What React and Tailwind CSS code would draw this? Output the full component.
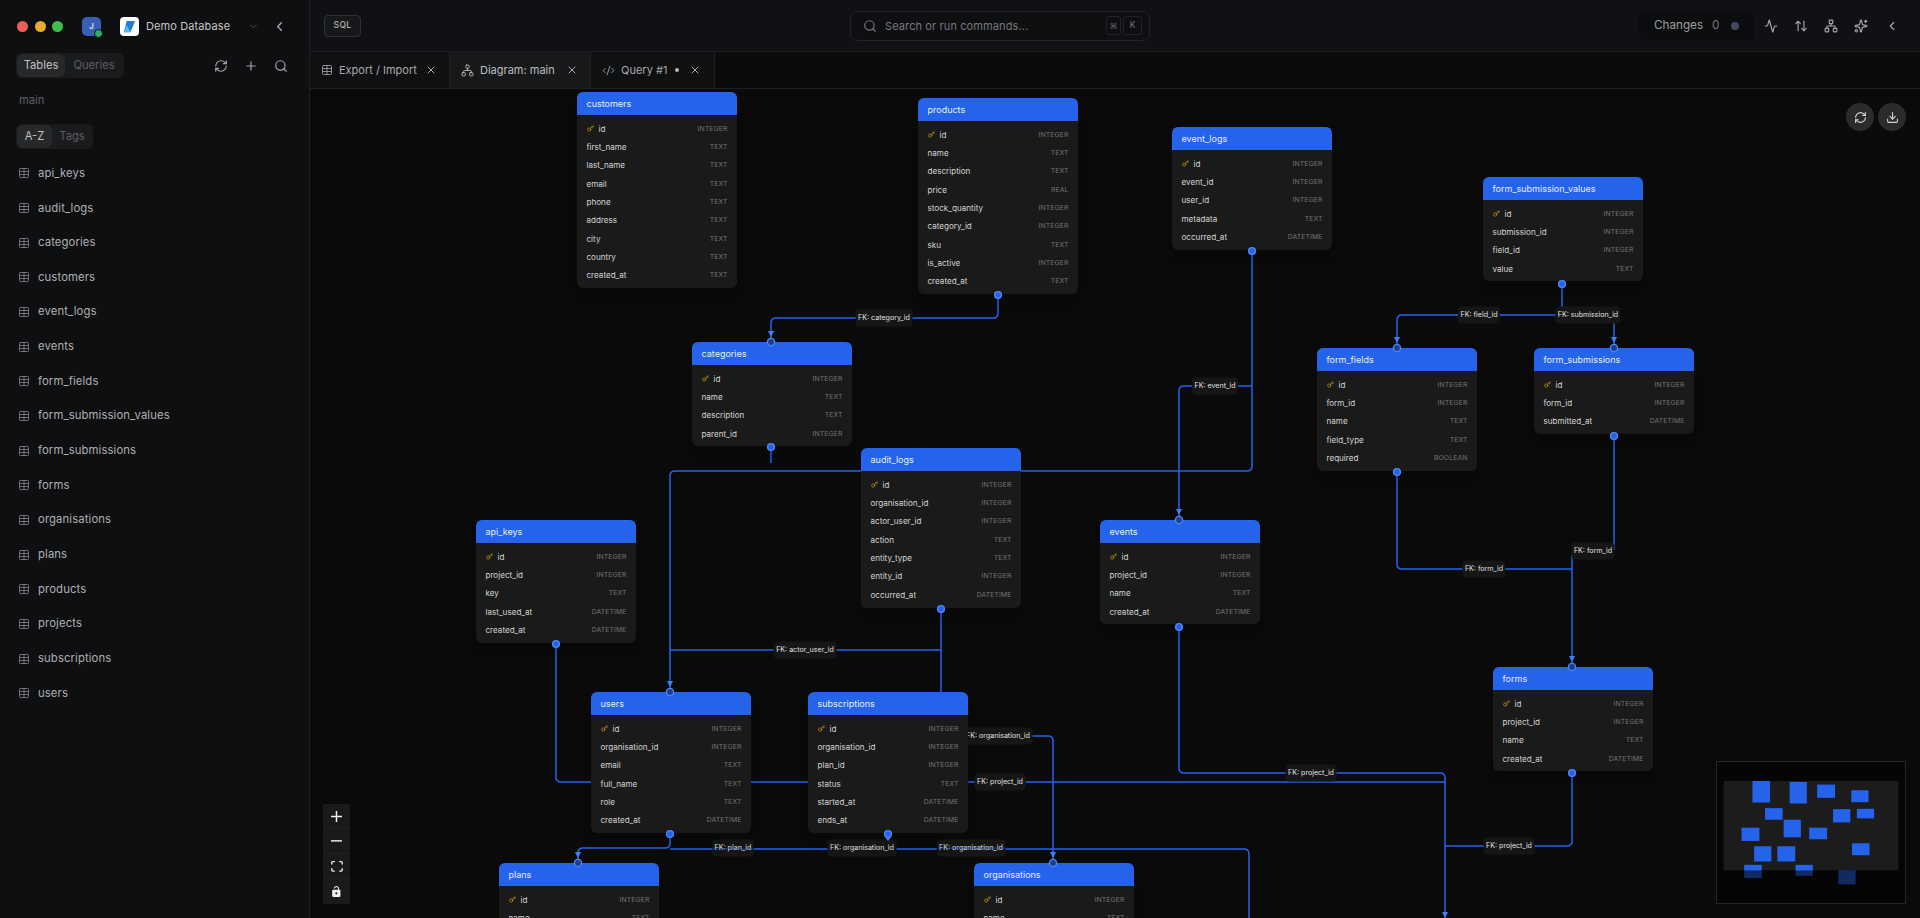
import React from "react";
import { Table, Network, CodeXml, X, RefreshCw, Plus, Search, ChevronDown, ChevronLeft, Activity, ArrowUpDown, Sparkles, Download, Key } from "lucide-react";

const I = "INTEGER", T = "TEXT", D = "DATETIME", R = "REAL", B = "BOOLEAN";
const OX = 310, OY = 89;

const NODES = [
  { n: "customers", x: 577, y: 92, f: [["id", I], ["first_name", T], ["last_name", T], ["email", T], ["phone", T], ["address", T], ["city", T], ["country", T], ["created_at", T]] },
  { n: "products", x: 918, y: 98, f: [["id", I], ["name", T], ["description", T], ["price", R], ["stock_quantity", I], ["category_id", I], ["sku", T], ["is_active", I], ["created_at", T]] },
  { n: "event_logs", x: 1172, y: 127, f: [["id", I], ["event_id", I], ["user_id", I], ["metadata", T], ["occurred_at", D]] },
  { n: "form_submission_values", x: 1483, y: 177, f: [["id", I], ["submission_id", I], ["field_id", I], ["value", T]] },
  { n: "categories", x: 692, y: 342, f: [["id", I], ["name", T], ["description", T], ["parent_id", I]] },
  { n: "form_fields", x: 1317, y: 348, f: [["id", I], ["form_id", I], ["name", T], ["field_type", T], ["required", B]] },
  { n: "form_submissions", x: 1534, y: 348, f: [["id", I], ["form_id", I], ["submitted_at", D]] },
  { n: "audit_logs", x: 861, y: 448, f: [["id", I], ["organisation_id", I], ["actor_user_id", I], ["action", T], ["entity_type", T], ["entity_id", I], ["occurred_at", D]] },
  { n: "api_keys", x: 476, y: 520, f: [["id", I], ["project_id", I], ["key", T], ["last_used_at", D], ["created_at", D]] },
  { n: "events", x: 1100, y: 520, f: [["id", I], ["project_id", I], ["name", T], ["created_at", D]] },
  { n: "users", x: 591, y: 692, f: [["id", I], ["organisation_id", I], ["email", T], ["full_name", T], ["role", T], ["created_at", D]] },
  { n: "subscriptions", x: 808, y: 692, f: [["id", I], ["organisation_id", I], ["plan_id", I], ["status", T], ["started_at", D], ["ends_at", D]] },
  { n: "forms", x: 1493, y: 667, f: [["id", I], ["project_id", I], ["name", T], ["created_at", D]] },
  { n: "plans", x: 499, y: 863, f: [["id", I], ["name", T]] },
  { n: "organisations", x: 974, y: 863, f: [["id", I], ["name", T]] },
];

const EDGES = [
  [[998, 296], [998, 318], [771, 318], [771, 342]],
  [[1252, 251], [1252, 471], [670, 471], [670, 692]],
  [[1252, 386], [1179, 386], [1179, 520]],
  [[771, 448], [771, 463]],
  [[941, 609], [941, 692]],
  [[941, 650], [670, 650]],
  [[556, 644], [556, 782], [591, 782]],
  [[750, 782], [808, 782]],
  [[968, 782], [1445, 782]],
  [[1179, 627], [1179, 773], [1445, 773], [1445, 918]],
  [[1572, 773], [1572, 846], [1445, 846]],
  [[1397, 472], [1397, 569], [1572, 569]],
  [[1572, 555], [1572, 667]],
  [[1614, 436], [1614, 550]],
  [[1562, 284], [1562, 315], [1397, 315], [1397, 348]],
  [[1562, 315], [1614, 315], [1614, 348]],
  [[670, 834], [670, 848], [578, 848], [578, 863]],
  [[670, 849], [1249, 849], [1249, 918]],
  [[1020, 736], [1053, 736], [1053, 863]],
];

const LABELS = [
  ["FK: category_id", 884, 318], ["FK: event_id", 1215, 386], ["FK: actor_user_id", 805, 650],
  ["FK: field_id", 1479, 315], ["FK: submission_id", 1588, 315], ["FK: form_id", 1484, 569],
  ["FK: form_id", 1593, 551], ["FK: organisation_id", 998, 736], ["FK: project_id", 1000, 782],
  ["FK: project_id", 1311, 773], ["FK: project_id", 1509, 846], ["FK: plan_id", 733, 848],
  ["FK: organisation_id", 862, 848], ["FK: organisation_id", 971, 848],
];

const SOURCES = [[998, 295], [1252, 251], [771, 447], [941, 609], [556, 644], [1179, 627], [1572, 773], [1397, 472], [1614, 436], [1562, 284], [670, 834], [888, 834]];
const TARGETS = [[771, 342], [670, 692], [1179, 520], [1572, 667], [1397, 348], [1614, 348], [578, 863], [1053, 863], [1445, 923]];

function round(points, r = 5) {
  let d = `M${points[0][0]} ${points[0][1]}`;
  for (let i = 1; i < points.length; i++) {
    const [x, y] = points[i];
    if (i === points.length - 1) { d += `L${x} ${y}`; break; }
    const [px, py] = points[i - 1];
    const [nx, ny] = points[i + 1];
    const inx = Math.sign(x - px), iny = Math.sign(y - py), outx = Math.sign(nx - x), outy = Math.sign(ny - y);
    d += `L${x - inx * r} ${y - iny * r}Q${x} ${y} ${x + outx * r} ${y + outy * r}`;
  }
  return d;
}

function EdgeLayer() {
  return (
    <svg className="absolute inset-0 w-full h-full" viewBox={`${OX} ${OY} 1610 829`} fill="none">
      {EDGES.map((p, i) => (
        <path key={i} d={round(p)} stroke="#2563eb" strokeWidth="1.5" />
      ))}
    </svg>
  );
}

function OverLayer() {
  return (
    <svg className="absolute inset-0 w-full h-full pointer-events-none" viewBox={`${OX} ${OY} 1610 829`} fill="none">
      <path d="M712 849H760M938 848H1005" stroke="#2563eb" strokeWidth="1" opacity="0.55" />
      {SOURCES.map(([x, y], i) => (
        <circle key={i} cx={x} cy={y} r="3.4" fill="#2563eb" stroke="#4f86f7" strokeWidth="1.4" />
      ))}
      <path d="M888 841l-3-4h6z" fill="#3b82f6" />
      {TARGETS.map(([x, y], i) => (
        <g key={i}>
          <path d={`M${x - 3} ${y - 11}h6l-3 6z`} fill="#3b82f6" />
          <circle cx={x} cy={y} r="3.6" fill="#1e3f8f" stroke="#4f86f7" strokeWidth="1.4" />
        </g>
      ))}
    </svg>
  );
}

function TableNode({ node }) {
  return (
    <div className="absolute w-[160px] rounded-md bg-[#1a1a1a] pb-[3.5px] shadow-lg" style={{ left: node.x - OX, top: node.y - OY }}>
      <div className="h-[23px] rounded-t-md bg-[#2563eb] flex items-center px-[9.5px] text-[9px] text-[#e6eeff]">{node.n}</div>
      <div className="pt-[4.5px] px-[9.5px]">
        {node.f.map(([name, type]) => (
          <div key={name} className="h-[18.37px] flex items-center justify-between">
            <span className="flex items-center gap-[5px] text-[8.1px] text-[#d4d4d4]">
              {name === "id" && <Key size={7} className="text-[#ca9a16]" strokeWidth={2.4} />}
              {name}
            </span>
            <span className="text-[6.8px] tracking-[0.02em] text-[#757575]">{type}</span>
          </div>
        ))}
      </div>
    </div>
  );
}

function EdgeLabel({ t, x, y }) {
  return (
    <div className="absolute h-[17px] -translate-x-1/2 -translate-y-1/2 px-[2.5px] flex items-center bg-[#161616] rounded-sm text-[7.1px] text-[#e0e0e0] whitespace-nowrap" style={{ left: x - OX, top: y - OY }}>
      {t}
    </div>
  );
}

function Minimap() {
  const rects = [[217, 122, 270, 187], [329, 125, 381, 190], [412, 133, 466, 173], [515, 150, 567, 186], [255, 204, 308, 239], [460, 207, 512, 247], [532, 206, 584, 235], [311, 239, 363, 292], [184, 263, 238, 303], [388, 263, 442, 298], [222, 319, 274, 365], [292, 319, 346, 365], [517, 310, 570, 346], [192, 375, 245, 415], [347, 375, 399, 408], [476, 392, 528, 434]];
  return (
    <div className="absolute right-[14px] bottom-[14px] w-[190px] h-[143px] border border-[#262626] bg-[#050505]">
      <svg viewBox="110 65 567 425" className="w-full h-full block">
        <rect x="130" y="122" width="527" height="270" fill="#1c1c1c" />
        {rects.map((r, i) => (
          <rect key={i} x={r[0]} y={r[1]} width={r[2] - r[0]} height={r[3] - r[1]} fill="#2563eb" />
        ))}
        <rect x="110" y="392" width="567" height="98" fill="#050505" opacity="0.6" />
      </svg>
    </div>
  );
}

function Controls() {
  const cell = "w-[27px] h-[25px] flex items-center justify-center border-b border-[#222] last:border-b-0";
  return (
    <div className="absolute left-[13px] bottom-[14px] w-[27px] bg-[#1a1a1a] text-[#f0f0f0]">
      <div className={cell}><svg viewBox="0 0 32 32" className="w-[11px] h-[11px]" fill="currentColor"><path d="M32 18.133H18.133V32h-4.266V18.133H0v-4.266h13.867V0h4.266v13.867H32z" /></svg></div>
      <div className={cell}><svg viewBox="0 0 32 5" className="w-[11px] h-[2px]" fill="currentColor"><path d="M0 0h32v4.2H0z" /></svg></div>
      <div className={cell}><svg viewBox="0 0 32 30" className="w-[12px] h-[11px]" fill="currentColor"><path d="M3.692 4.63c0-.53.4-.938.939-.938h5.215V0H4.708C2.13 0 0 2.054 0 4.63v5.216h3.692V4.631zM27.354 0h-5.2v3.692h5.17c.53 0 .984.4.984.939v5.215H32V4.631A4.624 4.624 0 0027.354 0zm.954 24.83c0 .532-.4.94-.939.94h-5.215v3.768h5.215c2.577 0 4.631-2.13 4.631-4.707v-5.139h-3.692v5.139zm-23.677.94c-.531 0-.939-.4-.939-.94v-5.138H0v5.139c0 2.577 2.13 4.707 4.708 4.707h5.138V25.77H4.631z" /></svg></div>
      <div className={cell}><svg viewBox="0 0 25 32" className="w-[9px] h-[11px]" fill="currentColor"><path d="M21.333 10.667H19.81V7.619C19.81 3.429 16.38 0 12.19 0 8 0 4.571 3.429 4.571 7.619h2.895c0-2.59 2.133-4.724 4.724-4.724 2.59 0 4.724 2.133 4.724 4.724v3.048H2.667A2.677 2.677 0 000 13.333v16c0 1.467 1.2 2.667 2.667 2.667h18.666c1.467 0 2.667-1.2 2.667-2.667v-16c0-1.466-1.2-2.666-2.667-2.666zM12 24.381a3.048 3.048 0 110-6.096 3.048 3.048 0 010 6.096z" /></svg></div>
    </div>
  );
}

function Sidebar() {
  const items = ["api_keys", "audit_logs", "categories", "customers", "event_logs", "events", "form_fields", "form_submission_values", "form_submissions", "forms", "organisations", "plans", "products", "projects", "subscriptions", "users"];
  return (
    <aside className="w-[310px] shrink-0 h-full bg-[#0e0f11] border-r border-[#1e1f21] flex flex-col">
      <div className="h-[52px] shrink-0 flex items-center pl-[17px] pr-[22px]">
        <div className="flex gap-[6.5px]">
          <span className="w-[11px] h-[11px] rounded-full bg-[#ec5f57]" />
          <span className="w-[11px] h-[11px] rounded-full bg-[#e9ad2d]" />
          <span className="w-[11px] h-[11px] rounded-full bg-[#3fc04c]" />
        </div>
        <div className="relative ml-[19px] w-[19px] h-[19px] rounded-[5px] bg-[#3a5db5] flex items-center justify-center text-[8px] font-semibold text-[#dbe5ff]">
          J
          <span className="absolute -right-[2px] -bottom-[2px] w-[9px] h-[9px] rounded-full bg-[#2fae5c] border border-[#0e0f11]" />
        </div>
        <div className="ml-[19px] w-[19px] h-[19px] rounded-[4px] bg-white flex items-center justify-center">
          <svg viewBox="0 0 16 16" className="w-[15px] h-[15px]"><path d="M5 2h9L9 14H2z" fill="#1f7fd6" /><path d="M2 14L5 6l4 8z" fill="#59b6ee" /></svg>
        </div>
        <span className="ml-[7px] text-[11px] tracking-[0.01em] text-[#c6c7c9] whitespace-nowrap">Demo Database</span>
        <ChevronDown size={11} className="ml-auto text-[#55565a]" />
        <ChevronLeft size={15} className="ml-[13px] text-[#b0b1b4]" />
      </div>
      <div className="flex items-center pl-[16px] pr-[21px] mt-px">
        <div className="w-[108px] h-[25px] bg-[#1a1b1d] rounded-md flex items-center p-px text-[11.2px]">
          <span className="w-[48px] h-[23px] rounded-md bg-[#27282a] flex items-center justify-center text-[#c0c1c3]">Tables</span>
          <span className="flex-1 text-center text-[#5d5e61]">Queries</span>
        </div>
        <div className="ml-auto flex items-center gap-[16px] text-[#a5a6a9]">
          <RefreshCw size={14} /><Plus size={14} /><Search size={14} />
        </div>
      </div>
      <div className="mt-[14px] pl-[19px] h-[16px] flex items-center text-[11.2px] text-[#5e5f62]">main</div>
      <div className="mt-[16px] ml-[16px] w-[77px] h-[25px] bg-[#1a1b1d] rounded-md flex items-center p-px text-[11.2px]">
        <span className="w-[35px] h-[23px] rounded-md bg-[#27282a] flex items-center justify-center text-[#c0c1c3]">A-Z</span>
        <span className="flex-1 text-center text-[#5d5e61]">Tags</span>
      </div>
      <ul className="mt-[7px]">
        {items.map((t) => (
          <li key={t} className="h-[34.67px] flex items-center gap-[8px] pl-[18px] text-[11.3px] tracking-[0.01em] text-[#aeafb2]">
            <Table size={12} className="text-[#85868a]" strokeWidth={1.6} />
            {t}
          </li>
        ))}
      </ul>
    </aside>
  );
}

function TopBar() {
  return (
    <div className="h-[52px] shrink-0 bg-[#101114] border-b border-[#1f2022] flex items-center pl-[14px] pr-[21px] relative">
      <div className="w-[37px] h-[22px] rounded-[4px] border border-[#303134] bg-[#17181a] flex items-center justify-center text-[8.5px] font-semibold tracking-[0.04em] text-[#a3a4a7]">SQL</div>
      <div className="ml-[489px] w-[300px] h-[30px] rounded-lg border border-[#222326] bg-[#0e0f11] flex items-center pl-[12px] pr-[7px]">
        <Search size={14} className="text-[#77787c]" />
        <span className="ml-[8px] pt-px text-[11px] tracking-[0.01em] text-[#77787c]">Search or run commands...</span>
        <span className="ml-auto w-[15px] h-[19px] rounded-[3px] border border-[#222326] flex items-center justify-center text-[8px] text-[#5e5f62]">⌘</span>
        <span className="ml-[2px] w-[19px] h-[19px] rounded-[3px] border border-[#222326] flex items-center justify-center text-[8.5px] text-[#77787c]">K</span>
      </div>
      <div className="ml-auto w-[115px] h-[29px] pt-px rounded bg-[#0c0d0e] flex items-center pl-[15px] text-[11.7px]">
        <span className="text-[#9c9da0]">Changes</span>
        <span className="ml-[9px] text-[#77787c]">0</span>
        <span className="ml-[12px] w-[8px] h-[8px] rounded-full bg-[#454862]" />
      </div>
      <div className="ml-[10px] flex items-center gap-[16px] text-[#a5a6a9]">
        <Activity size={14} /><ArrowUpDown size={14} /><Network size={14} /><Sparkles size={14} /><ChevronLeft size={14} className="ml-[1px]" />
      </div>
    </div>
  );
}

function TabBar() {
  const Tab = ({ icon, label, active, dot, w }) => (
    <div className={`h-full flex items-center pl-[11px] border-r border-[#1f2022] text-[11px] whitespace-nowrap ${w} ${active ? "bg-[#17181a] text-[#bdbec0]" : "bg-[#0f1012] text-[#a8a9ac]"}`}>
      {icon}
      <span className="ml-[6px]">{label}</span>
      {dot && <span className="ml-[8px] w-[3.5px] h-[3.5px] rounded-full bg-[#b5b6b8]" />}
      <X size={12} className={`${dot ? "ml-[10px]" : "ml-auto mr-[12px]"} text-[#a8a9ac]`} />
    </div>
  );
  return (
    <div className="h-[37px] shrink-0 bg-[#0a0a0b] border-b border-[#1f2022] flex">
      <Tab w="w-[140px]" label="Export / Import" icon={<Table size={12} strokeWidth={1.6} />} />
      <Tab w="w-[141px]" active label="Diagram: main" icon={<Network size={13} strokeWidth={1.6} />} />
      <Tab w="w-[124px]" dot label="Query #1" icon={<CodeXml size={13} strokeWidth={1.6} />} />
    </div>
  );
}

export default function App() {
  return (
    <div className="h-screen w-full flex overflow-hidden bg-[#0a0a0a] font-['Inter','Liberation_Sans',sans-serif]">
      <Sidebar />
      <main className="flex-1 min-w-0 h-full flex flex-col">
        <TopBar />
        <TabBar />
        <div className="relative flex-1 overflow-hidden bg-[#0a0a0a]">
          <EdgeLayer />
          {LABELS.map(([t, x, y], i) => <EdgeLabel key={i} t={t} x={x} y={y} />)}
          {NODES.map((n) => <TableNode key={n.n} node={n} />)}
          <OverLayer />
          <div className="absolute right-[14px] top-[14px] flex gap-[4px]">
            <div className="w-[28px] h-[28px] rounded-full bg-[#2b2b2b] flex items-center justify-center text-[#d4d4d4]"><RefreshCw size={13} /></div>
            <div className="w-[28px] h-[28px] rounded-full bg-[#2b2b2b] flex items-center justify-center text-[#d4d4d4]"><Download size={13} /></div>
          </div>
          <Controls />
          <Minimap />
        </div>
      </main>
    </div>
  );
}
